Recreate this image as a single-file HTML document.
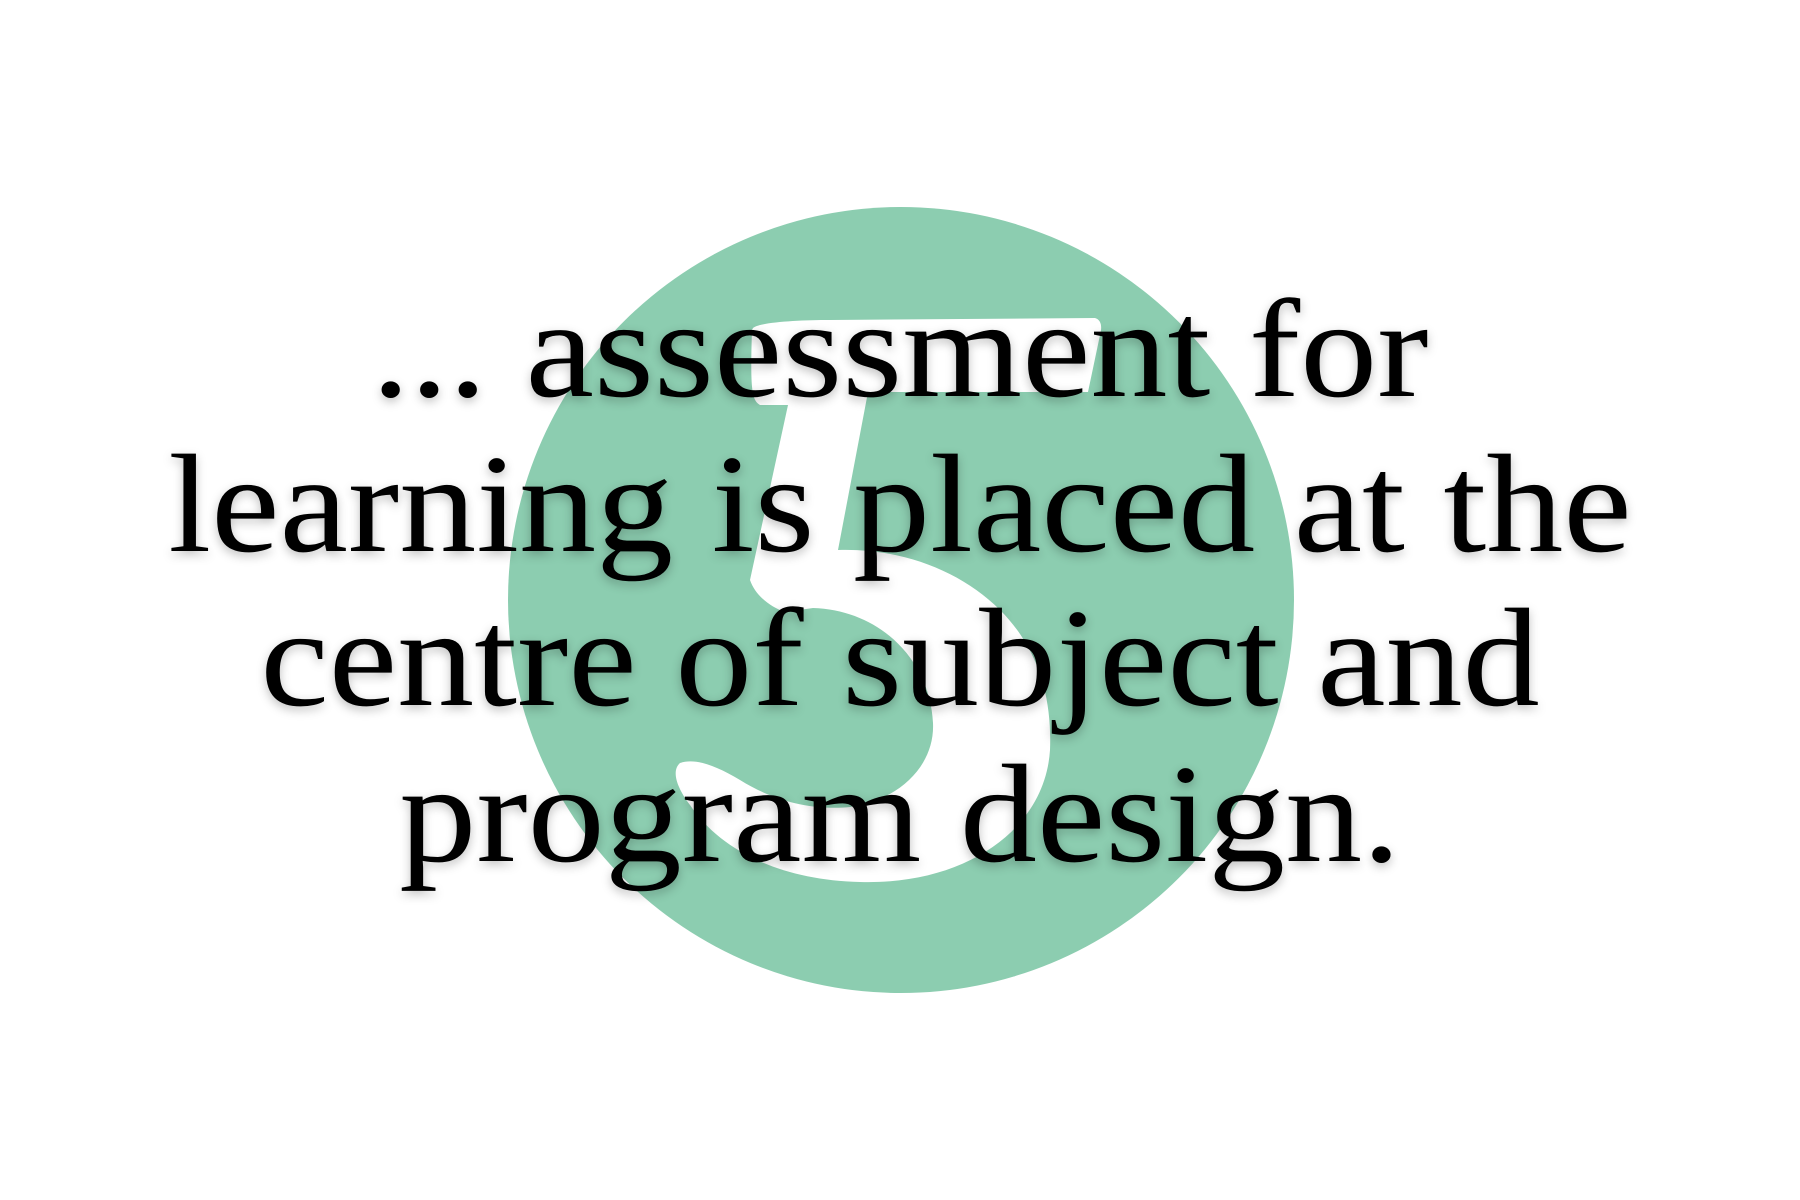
<!DOCTYPE html>
<html><head><meta charset="utf-8"><style>
html,body{margin:0;padding:0;background:#fff;width:1800px;height:1200px;overflow:hidden}
svg{position:absolute;left:0;top:0}
.t{position:absolute;left:0;width:1800px;text-align:center;font-family:"Liberation Serif",serif;font-size:115px;color:#000;white-space:pre;text-shadow:0 3px 8px rgba(0,0,0,.25);transform:scale(1.34,1.22);transform-origin:50% 96px;line-height:115px}
</style></head><body>
<svg width="1800" height="1200" viewBox="0 0 1800 1200">
<circle cx="901" cy="600" r="393" fill="#8ccdb0"/>
<path fill="#fff" d="M753,328 C760,322 800,320 830,320 L1095,318 C1102,320 1102,328 1100,335 L1088,392 L868,392 L838,550 C900,548 960,570 1000,610 C1040,650 1052,700 1050,750 C1045,830 965,885 860,882 C780,880 720,850 690,805 C675,785 672,770 680,763 C695,758 715,765 740,780 C780,805 820,810 850,807 C900,800 935,765 933,723 C930,660 880,610 813,608 L785,612 C770,607 755,595 750,580 L788,405 L760,405 C752,400 750,392 752,330 Z"/>
</svg>
<div class="t" style="top:300px">... assessment for</div>
<div class="t" style="top:455px">learning is placed at the</div>
<div class="t" style="top:609px">centre of subject and</div>
<div class="t" style="top:765px">program design.</div>
</body></html>
